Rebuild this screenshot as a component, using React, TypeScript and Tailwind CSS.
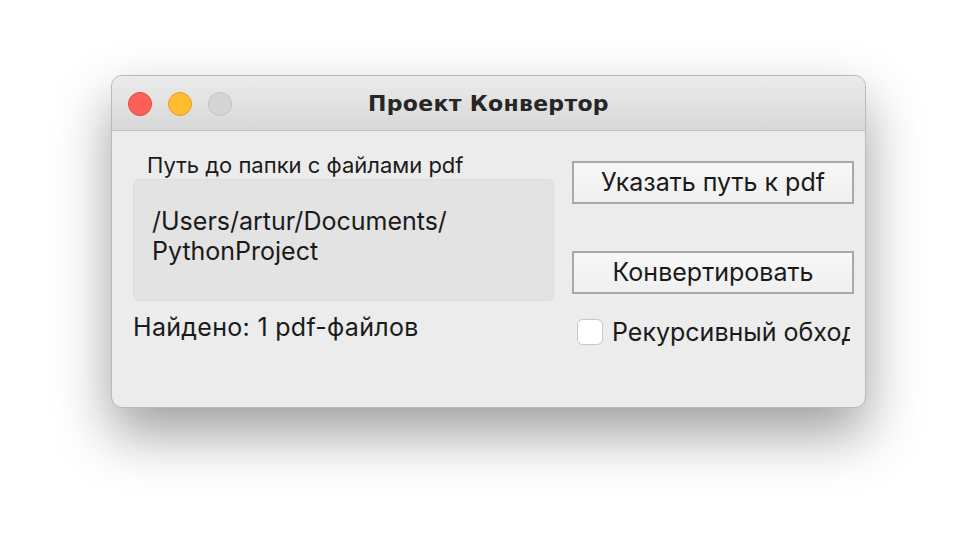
import React from "react";

export default function App() {
  return (
    <div className="w-[978px] h-[556px] bg-white pl-[111px] pt-[75px]" style={{ fontFamily: "Inter, 'Noto Sans', sans-serif" }}>
      <div className="w-[755px] h-[333px] rounded-[11px] border border-[#b9b9b9] bg-[#ececec] overflow-hidden shadow-[0_26px_55px_rgba(0,0,0,0.38)] flex flex-col">
        <div className="h-[55px] shrink-0 border-b border-[#c3c3c3] bg-gradient-to-b from-[#ebebeb] to-[#d8d8d8] flex items-center relative">
          <div className="flex gap-[16px] pl-[16px] pt-[1px]">
            <div className="w-[24px] h-[24px] rounded-full bg-[#fe5f57] border border-[#e0443e]" />
            <div className="w-[24px] h-[24px] rounded-full bg-[#febc2e] border border-[#dea123]" />
            <div className="w-[24px] h-[24px] rounded-full bg-[#d5d5d5] border border-[#c2c2c2]" />
          </div>
          <div className="absolute inset-0 flex items-center justify-center pt-[1px] text-[22px] font-bold text-[#262626] tracking-[0.3px]" style={{ fontFamily: "'DejaVu Sans', sans-serif" }}>
            Проект Конвертор
          </div>
        </div>
        <div className="flex pl-[21px] pt-[22px]">
          <div className="w-[421px] flex flex-col">
            <div className="pl-[14px] text-[22px] leading-[24px] text-[#1a1a1a]">Путь до папки с файлами pdf</div>
            <div className="mt-[2px] h-[122px] rounded-[6px] border border-[#dcdcdc] bg-[#e3e3e3] pl-[18px] pt-[26px] text-[25px] leading-[30px] text-[#1a1a1a]">
              <div>/Users/artur/Documents/</div>
              <div>PythonProject</div>
            </div>
            <div className="mt-[11px] text-[25px] leading-[30px] tracking-[0.3px] text-[#1a1a1a]">Найдено: 1 pdf-файлов</div>
          </div>
          <div className="ml-[18px] pt-[8px] flex flex-col w-[282px]">
            <div className="h-[43px] border-2 border-[#a9a9a9] bg-gradient-to-b from-[#f7f7f7] to-[#f0f0f0] flex items-center justify-center text-[25px] text-[#1a1a1a]">
              Указать путь к pdf
            </div>
            <div className="mt-[47px] h-[43px] border-2 border-[#a9a9a9] bg-gradient-to-b from-[#f7f7f7] to-[#f0f0f0] flex items-center justify-center text-[25px] text-[#1a1a1a]">
              Конвертировать
            </div>
            <div className="mt-[23px] flex items-center pl-[5px] overflow-hidden w-[278px]">
              <div className="w-[26px] h-[26px] shrink-0 rounded-[6px] bg-white border border-[#c8c8c8]" />
              <div className="ml-[9px] whitespace-nowrap text-[25px] leading-[30px] text-[#1a1a1a]">Рекурсивный обход</div>
            </div>
          </div>
        </div>
      </div>
    </div>
  );
}
